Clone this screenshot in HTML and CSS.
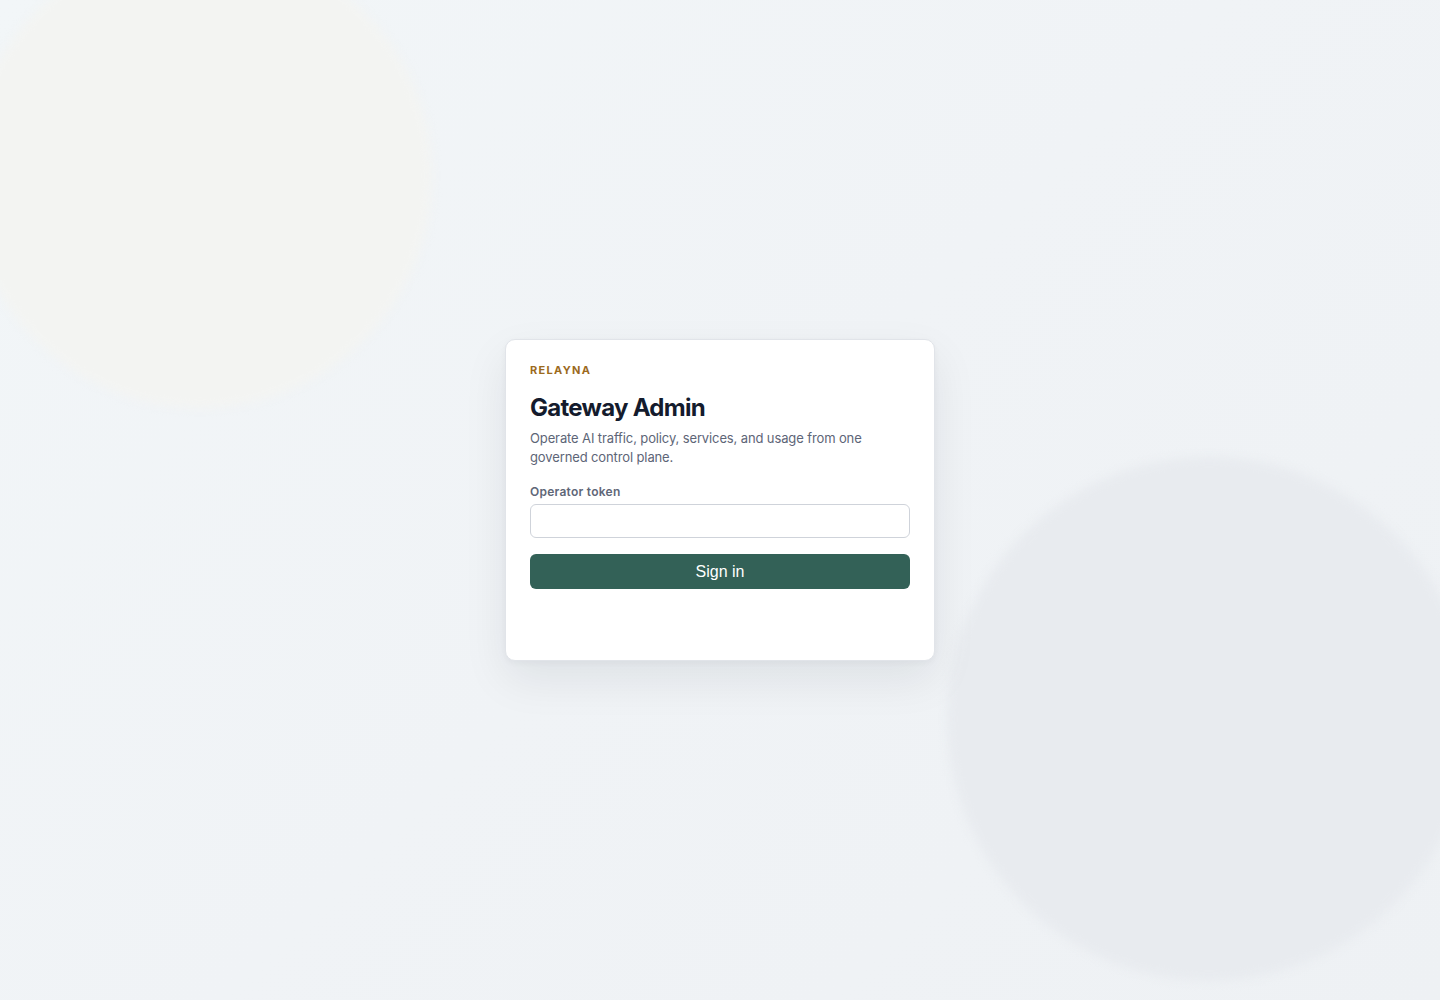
FILE: index.html
```html
<!DOCTYPE html>
<html lang="en">
<head>
<meta charset="utf-8">
<title>Gateway Admin · Relayna</title>
<link rel="stylesheet" href="styles.css">
</head>
<body>
<div class="page">
  <div class="blob blob-warm"></div>
  <div class="blob blob-cool"></div>
  <main class="card">
    <p class="brand">RELAYNA</p>
    <h1 class="title">Gateway Admin</h1>
    <p class="lead">Operate AI traffic, policy, services, and usage from one governed control plane.</p>
    <form class="form">
      <label class="label" for="token">Operator token</label>
      <input class="input" id="token" type="password" autocomplete="off">
      <button class="button" type="button">Sign in</button>
      <p class="status"></p>
    </form>
  </main>
</div>
</body>
</html>
```

FILE: styles.css
```css
* { box-sizing: border-box; }
html, body { margin: 0; padding: 0; height: 100%; }
body {
  font-family: Inter, "Noto Sans", sans-serif;
  color: #141b2d;
  overflow: hidden;
}
.page {
  position: relative;
  min-height: 100vh;
  display: flex;
  align-items: center;
  justify-content: center;
  background: linear-gradient(135deg, #f2f6f8 0%, #f0f3f6 50%, #eef1f4 100%);
  overflow: hidden;
}
.blob {
  position: absolute;
  border-radius: 50%;
  filter: blur(5px);
  pointer-events: none;
}
.blob-warm {
  width: 464px;
  height: 464px;
  left: -32px;
  top: -56px;
  background: #f3f4f2;
}
.blob-cool {
  width: 524px;
  height: 524px;
  left: 947px;
  top: 457px;
  background: #e8ebef;
}
.card {
  position: relative;
  width: 430px;
  background: #ffffff;
  border: 1px solid #e1e4e9;
  border-radius: 10px;
  padding: 24px;
  box-shadow: 0 18px 45px rgba(15, 23, 42, 0.08), 0 2px 6px rgba(15, 23, 42, 0.04);
}
.brand {
  margin: 0;
  font-size: 11px;
  line-height: 13px;
  font-weight: 700;
  letter-spacing: 0.12em;
  color: #9c6a1d;
}
.title {
  margin: 16px 0 0;
  font-size: 24px;
  line-height: 30px;
  font-weight: 700;
  letter-spacing: -0.03em;
  color: #141b2d;
}
.lead {
  margin: 6px 0 0;
  font-size: 13px;
  line-height: 19px;
  letter-spacing: -0.12px;
  color: #5d6577;
}
.form {
  margin-top: 17px;
  display: flex;
  flex-direction: column;
}
.label {
  font-size: 12px;
  line-height: 16px;
  font-weight: 600;
  letter-spacing: 0.25px;
  color: #5f6778;
}
.input {
  margin-top: 4px;
  height: 34px;
  width: 100%;
  border: 1px solid #cfd3da;
  border-radius: 6px;
  background: #fff;
  padding: 0 10px;
  font-family: Inter, sans-serif;
  font-size: 14px;
  outline: none;
}
.button {
  margin-top: 16px;
  height: 35px;
  width: 100%;
  border: none;
  border-radius: 6px;
  background: #336157;
  color: #ffffff;
  font-family: "Liberation Sans", Arial, sans-serif;
  font-size: 16px;
  cursor: pointer;
}
.status {
  margin: 0;
  min-height: 47px;
}
```
